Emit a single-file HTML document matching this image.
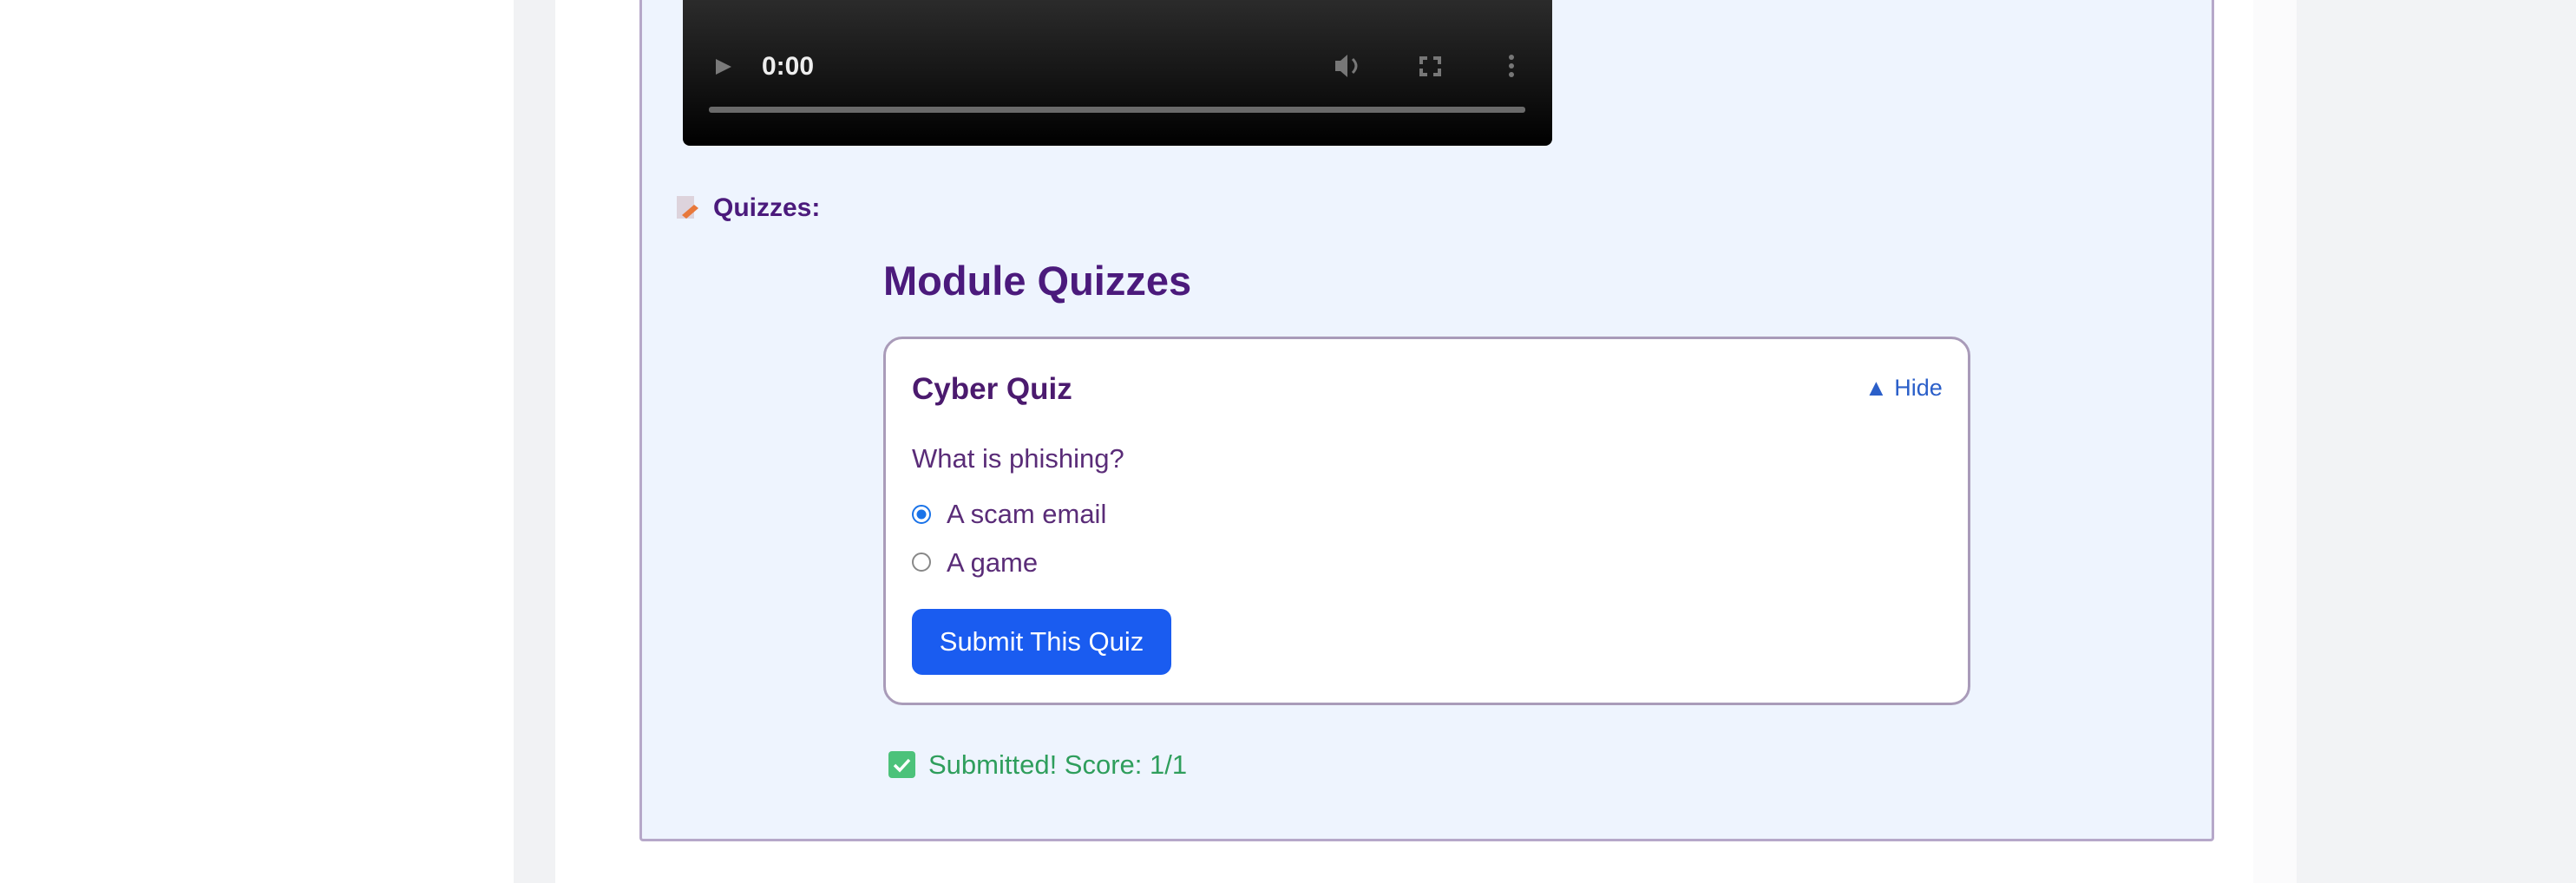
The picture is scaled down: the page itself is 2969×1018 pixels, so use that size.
<!DOCTYPE html>
<html><head><meta charset="utf-8"><style>
*{margin:0;padding:0;box-sizing:border-box}
html,body{width:2969px;height:1018px;overflow:hidden;background:#fff;font-family:"Liberation Sans",Arial,sans-serif}
.abs{position:absolute}
.t{position:absolute;white-space:nowrap;line-height:1}
</style></head><body>
<div class="abs" style="left:592px;top:0;width:48px;height:1018px;background:#f1f2f4"></div>
<div class="abs" style="left:2597px;top:0;width:50px;height:1018px;background:#fbfbfc"></div>
<div class="abs" style="left:2647px;top:0;width:322px;height:1018px;background:#f2f3f5"></div>
<div class="abs" style="left:737px;top:-20px;width:1815px;height:990px;background:#eef4fe;border:3px solid #b6a8c9;border-top:none;border-radius:0 0 4px 4px"></div>
<div class="abs" style="left:787px;top:0;width:1002px;height:168px;background:linear-gradient(#2b2b2b,#121212 60%,#000);border-radius:0 0 8px 8px"></div>
<svg class="abs" style="left:787px;top:0" width="1002" height="168">
<polygon points="38,68 38,86 56,77" fill="#7a7a7a"/>
<rect x="30" y="123" width="941" height="7" rx="3" fill="#6a6a6a"/>
<path d="M752,70 h6 l8,-7 v26 l-8,-7 h-6z" fill="#777"/>
<path d="M772,68 q8,8 0,16" stroke="#777" stroke-width="3" fill="none"/>
<path d="M851,74 v-7 h7 M865,67 h7 v7 M872,79 v7 h-7 M858,86 h-7 v-7" stroke="#777" stroke-width="4" fill="none"/>
<circle cx="955" cy="66" r="3" fill="#777"/><circle cx="955" cy="76" r="3" fill="#777"/><circle cx="955" cy="86" r="3" fill="#777"/>
</svg>
<div class="t" style="left:878px;top:62px;font-size:30px;font-weight:bold;color:#eee">0:00</div>
<svg class="abs" style="left:778px;top:224px" width="30" height="32"><rect x="2" y="2" width="20" height="26" fill="#ddd3dc"/><path d="M8,24 l14,-12 l5,4 l-14,12z" fill="#e8783a"/></svg>
<div class="t" style="left:822px;top:225px;font-size:30px;font-weight:bold;color:#4b1a7c">Quizzes:</div>
<div class="t" style="left:1018px;top:300px;font-size:47px;font-weight:bold;color:#4b1a7c">Module Quizzes</div>
<div class="abs" style="left:1018px;top:388px;width:1253px;height:425px;background:#fff;border:3px solid #a99bb9;border-radius:22px"></div>
<div class="t" style="left:1051px;top:431px;font-size:35px;font-weight:bold;color:#4b1a6e">Cyber Quiz</div>
<div class="t" style="left:2149px;top:434px;font-size:27px;color:#2b5fc9">▲ Hide</div>
<div class="t" style="left:1051px;top:513px;font-size:31px;color:#5a2c78">What is phishing?</div>
<svg class="abs" style="left:1050px;top:580px" width="26" height="80">
<circle cx="12" cy="13" r="10" fill="#fff" stroke="#1a73e8" stroke-width="2"/><circle cx="12" cy="13" r="5.5" fill="#1a73e8"/>
<circle cx="12" cy="68" r="10" fill="#fff" stroke="#888" stroke-width="2"/>
</svg>
<div class="t" style="left:1091px;top:577px;font-size:31px;color:#5a2c78">A scam email</div>
<div class="t" style="left:1091px;top:633px;font-size:31px;color:#5a2c78">A game</div>
<div class="abs" style="left:1051px;top:702px;width:299px;height:76px;background:#1a5cf0;border-radius:12px;color:#fff;font-size:31px;line-height:76px;text-align:center">Submit This Quiz</div>
<svg class="abs" style="left:1024px;top:866px" width="32" height="32"><rect width="31" height="31" rx="4" fill="#4cc27a"/><path d="M7,16 l6,6 l11,-12" stroke="#fff" stroke-width="3.5" fill="none"/></svg>
<div class="t" style="left:1070px;top:866px;font-size:31px;color:#2f9e5c">Submitted! Score: 1/1</div>
</body></html>
